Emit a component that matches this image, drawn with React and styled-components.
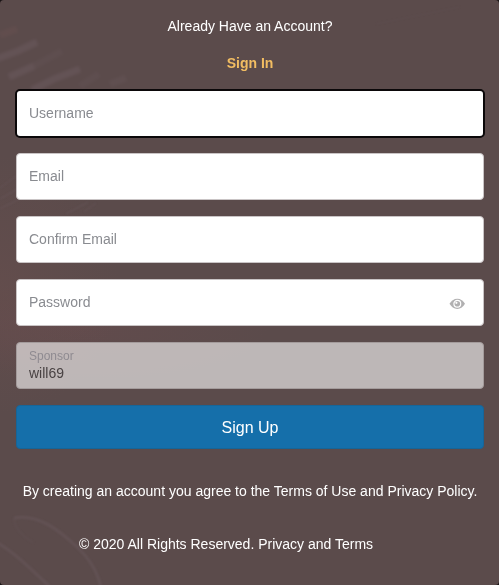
import React from "react";
import styled, { createGlobalStyle } from "styled-components";

const GlobalStyle = createGlobalStyle`
  *, *::before, *::after { box-sizing: border-box; }
  body {
    margin: 0;
    background: #191314;
    font-family: "Liberation Sans", Arial, sans-serif;
    font-size: 14px;
    line-height: 21px;
    color: #fff;
  }
`;

const Card = styled.main`
  position: relative;
  isolation: isolate;
  display: flex;
  flex-direction: column;
  height: 585px;
  padding: 16px 15px 0 16px;
  overflow: hidden;
  border-radius: 4px;
  background:
    radial-gradient(ellipse 120px 130px at 0 285px, rgba(118, 82, 80, 0.28), transparent),
    radial-gradient(ellipse 190px 50px at 80px 330px, rgba(112, 76, 80, 0.3), transparent),
    #5b4b4b;
`;

const Backdrop = styled.svg`
  position: absolute;
  inset: 0;
  z-index: -1;
  width: 100%;
  height: 100%;
  fill: none;
  stroke: #8a7784;
`;

const Intro = styled.header`
  display: flex;
  flex-direction: column;
  align-items: center;
  gap: 16px;
  margin-bottom: 16px;
`;

const Paragraph = styled.p`
  margin: 0;
`;

const Link = styled.a`
  color: inherit;
  text-decoration: none;
`;

const SignInLink = styled(Link)`
  color: #f2bd62;
  font-weight: 700;
`;

const Form = styled.form`
  display: flex;
  flex-direction: column;
  gap: 16px;
`;

const Field = styled.label`
  display: flex;
  align-items: center;
  height: 47px;
  padding: 0 18px 0 12px;
  border: 1px solid #c9c4c5;
  border-radius: 4px;
  background: #fff;

  &:has(input[data-active="true"]) {
    border-color: #fff;
    outline: 2px solid #0b0809;
    outline-offset: -1px;
  }
`;

const Input = styled.input`
  flex: 1;
  min-width: 0;
  height: 21px;
  padding: 0;
  border: 0;
  outline: 0;
  background: transparent;
  color: #333;
  font: inherit;

  &::placeholder {
    color: #898b90;
    opacity: 1;
  }
`;

const EyeButton = styled.button`
  display: flex;
  margin-top: 2px;
  padding: 0;
  border: 0;
  background: none;
  color: #b1b0b1;

  svg { width: 16px; height: 14px; }
`;

const SponsorField = styled(Field)`
  flex-direction: column;
  align-items: stretch;
  justify-content: flex-start;
  padding-top: 4px;
  border-color: #a39b9b;
  background: rgba(255, 255, 255, 0.6);
`;

const SponsorLabel = styled.span`
  height: 18px;
  font-size: 12px;
  line-height: 18px;
  color: #8f8b91;
`;

const SponsorInput = styled(Input)`
  flex: none;
  height: 16px;
  color: #494243;
`;

const SubmitButton = styled.button`
  height: 44px;
  padding: 2px 0 0;
  border: 1px solid #176597;
  border-radius: 4px;
  background: #156faa;
  color: #fff;
  font: 16px/24px "Liberation Sans", Arial, sans-serif;
`;

const Terms = styled(Paragraph)`
  margin-top: 32px;
  text-align: center;
`;

const Copyright = styled.footer`
  margin: 32px 0 0 63px;
`;

function EyeIcon() {
  return (
    <svg viewBox="0 0 16 14" aria-hidden="true">
      <path d="M.5 6.800C2.200 3.700 5 1.700 8.300 1.700S14.300 3.700 16 6.800c-1.700 3.100-4.400 5.100-7.700 5.100S2.200 9.900 .5 6.800Z" fill="currentColor" />
      <circle cx="8.300" cy="6.800" r="3.400" fill="currentColor" stroke="#fff" strokeWidth="1.200" />
      <circle cx="7.400" cy="5.800" r="1.100" fill="#fff" />
    </svg>
  );
}

function CoffeeBackdrop() {
  return (
    <Backdrop viewBox="0 0 499 585" aria-hidden="true">
      <defs>
        <filter id="soft" x="-20%" y="-20%" width="140%" height="140%">
          <feGaussianBlur stdDeviation="1.5" />
        </filter>
        <filter id="fine">
          <feGaussianBlur stdDeviation="0.8" />
        </filter>
      </defs>
      <g strokeWidth="7" opacity="0.18" filter="url(#soft)">
        <path d="M-4 59 18 51 37 42" />
        <path d="M9 77 34 66" />
        <path d="M34 66 62 51" opacity="0.4" />
        <path d="M32 90 54 79 80 69" />
        <path d="M80 86 99 74" opacity="0.4" />
        <path d="M0 35 17 29" stroke="#a06a68" opacity="0.5" />
        <path d="M110 84 126 78" opacity="0.55" />
      </g>
      <g strokeWidth="1.5" opacity="0.13" filter="url(#fine)">
        <path d="M0 188 20 173M0 199 28 183M0 209 36 190M66 214 88 202M84 212 96 203" />
        <path d="M112 249 124 238M142 248 160 237M171 248 188 236" />
        <path d="M376 24 460 7" opacity="0.4" />
      </g>
      <g strokeWidth="3" opacity="0.17" filter="url(#fine)">
        <path d="M14 518C38 513 60 531 77 547 91 560 98 573 101 588" />
        <path d="M-2 543C16 554 31 569 50 587" />
        <path d="M14 518C14 528 22 536 34 543" opacity="0.3" />
      </g>
    </Backdrop>
  );
}

export default function App() {
  return (
    <>
      <GlobalStyle />
      <Card>
        <CoffeeBackdrop />
        <Intro>
          <Paragraph>Already Have an Account?</Paragraph>
          <SignInLink href="#signin">Sign In</SignInLink>
        </Intro>
        <Form>
          <Field><Input placeholder="Username" data-active="true" /></Field>
          <Field><Input type="email" placeholder="Email" /></Field>
          <Field><Input type="email" placeholder="Confirm Email" /></Field>
          <Field>
            <Input type="password" placeholder="Password" />
            <EyeButton type="button" aria-label="Show password"><EyeIcon /></EyeButton>
          </Field>
          <SponsorField>
            <SponsorLabel>Sponsor</SponsorLabel>
            <SponsorInput readOnly value="will69" />
          </SponsorField>
          <SubmitButton type="button">Sign Up</SubmitButton>
        </Form>
        <Terms>
          By creating an account you agree to the <Link href="#terms">Terms of Use</Link> and <Link href="#privacy">Privacy Policy.</Link>
        </Terms>
        <Copyright>© 2020 All Rights Reserved. <Link href="#legal">Privacy and Terms</Link></Copyright>
      </Card>
    </>
  );
}
